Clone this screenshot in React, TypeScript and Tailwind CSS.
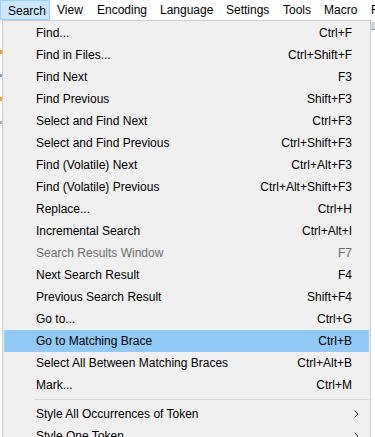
type Item = {
  label: string;
  shortcut?: string;
  disabled?: boolean;
  active?: boolean;
  sub?: boolean;
};

const MENUBAR = [
  { label: "Search", w: "w-[50px]", open: true },
  { label: "View", w: "w-[40px]" },
  { label: "Encoding", w: "w-[63px]" },
  { label: "Language", w: "w-[66px]" },
  { label: "Settings", w: "w-[57px]" },
  { label: "Tools", w: "w-[41px]" },
  { label: "Macro", w: "w-[47px]" },
  { label: "F", w: "w-[20px]" },
];

const ITEMS: (Item | "sep")[] = [
  { label: "Find...", shortcut: "Ctrl+F" },
  { label: "Find in Files...", shortcut: "Ctrl+Shift+F" },
  { label: "Find Next", shortcut: "F3" },
  { label: "Find Previous", shortcut: "Shift+F3" },
  { label: "Select and Find Next", shortcut: "Ctrl+F3" },
  { label: "Select and Find Previous", shortcut: "Ctrl+Shift+F3" },
  { label: "Find (Volatile) Next", shortcut: "Ctrl+Alt+F3" },
  { label: "Find (Volatile) Previous", shortcut: "Ctrl+Alt+Shift+F3" },
  { label: "Replace...", shortcut: "Ctrl+H" },
  { label: "Incremental Search", shortcut: "Ctrl+Alt+I" },
  { label: "Search Results Window", shortcut: "F7", disabled: true },
  { label: "Next Search Result", shortcut: "F4" },
  { label: "Previous Search Result", shortcut: "Shift+F4" },
  { label: "Go to...", shortcut: "Ctrl+G" },
  { label: "Go to Matching Brace", shortcut: "Ctrl+B", active: true },
  { label: "Select All Between Matching Braces", shortcut: "Ctrl+Alt+B" },
  { label: "Mark...", shortcut: "Ctrl+M" },
  "sep",
  { label: "Style All Occurrences of Token", sub: true },
  { label: "Style One Token", sub: true },
];

function SubArrow() {
  return (
    <svg width="5" height="8" viewBox="0 0 5 8" className="absolute right-[10px] top-[7px]">
      <path d="M0.5 0.5 L4 4 L0.5 7.5" fill="none" stroke="#444" strokeWidth="1" />
    </svg>
  );
}

export default function App() {
  return (
    <div className="w-[375px] h-[437px] overflow-hidden bg-white text-[12px] text-black font-['Segoe_UI','Liberation_Sans',sans-serif]">
      {/* menu bar */}
      <div className="flex h-[20px] bg-white">
        {MENUBAR.map((m) => (
          <div
            key={m.label}
            className={`${m.w} shrink-0 h-[20px] pl-[7px] leading-[20px] whitespace-nowrap ${
              m.open ? "bg-[#cce8ff] border border-[#99d1ff] pl-[6px] leading-[18px]" : ""
            }`}
          >
            {m.label}
          </div>
        ))}
      </div>

      <div className="flex">
        {/* editor strip on left */}
        <div className="w-[2px] flex flex-col gap-[20px] pt-[30px]">
          <div className="h-[4px] bg-[#f2a23c]" />
          <div className="h-[3px] bg-[#7aa0d8]" />
          <div className="h-[4px] bg-[#f2a23c]" />
          <div className="h-[3px] bg-[#aaaaaa]" />
        </div>

        {/* dropdown */}
        <div className="w-[369px] h-[430px] shrink-0 bg-[#f0f0f0] border border-[#cccccc] py-[1px] px-[1px]">
          {ITEMS.map((it, i) =>
            it === "sep" ? (
              <div key={i} className="h-[7px] flex items-center pl-[30px]">
                <div className="h-px w-full bg-[#d7d7d7]" />
              </div>
            ) : (
              <div
                key={i}
                className={`relative h-[22px] flex items-center pl-[32px] pr-[17px] whitespace-nowrap ${
                  it.active ? "bg-[#91c9f7]" : ""
                } ${it.disabled ? "text-[#6d6d6d]" : ""}`}
              >
                <span className="flex-1">{it.label}</span>
                {it.shortcut && <span>{it.shortcut}</span>}
                {it.sub && <SubArrow />}
              </div>
            )
          )}
        </div>

        {/* editor strip on right */}
        <div className="flex-1 flex flex-col bg-white">
          <div className="h-[7px] mt-[2px] bg-[#d6d6d6]" />
          <div className="h-[1px] bg-[#7a9acc]" />
        </div>
      </div>
    </div>
  );
}
